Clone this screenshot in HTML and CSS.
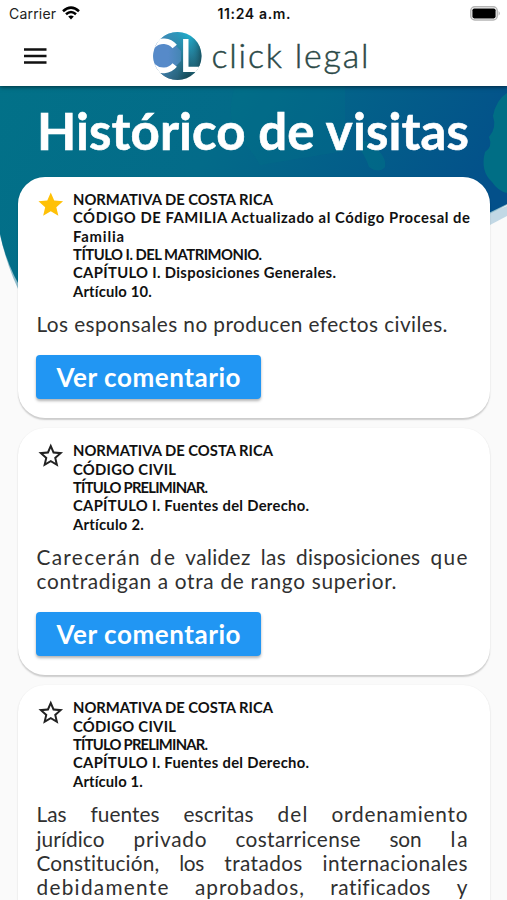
FILE: index.html
```html
<!DOCTYPE html>
<html lang="es">
<head>
<meta charset="utf-8">
<title>click legal</title>
<link rel="stylesheet" href="styles.css">
</head>
<body>
<header class="top">
  <div class="status">
    <div class="carrier"><span data-w="47">Carrier</span>
      <svg width="18" height="14" viewBox="0 0 18 14" fill="none" stroke="#000" stroke-width="2.6"><path d="M1 5.2Q9-1.8 17 5.2M4 8.2Q9 3.8 14 8.2"/><path d="M6.2 10.6Q9 8.2 11.8 10.6L9 13.5Z" fill="#000" stroke="none"/></svg>
    </div>
    <span class="time" data-w="73">11:24 a.m.</span>
    <svg class="battery" width="31" height="15" viewBox="0 0 31 15"><rect x=".8" y=".8" width="26.4" height="13.2" rx="4" fill="#fff" stroke="#b5b5b5" stroke-width="1.5"/><rect x="2.4" y="2.4" width="23.2" height="10" rx="1.8"/><path d="M28.6 5Q31 7.4 28.6 9.8Z" fill="#aaa"/></svg>
  </div>
  <div class="bar">
    <svg class="menu" width="23" height="16" viewBox="0 0 23 16"><path d="M0 1.6H22.5M0 8H22.5M0 14.4H22.5" stroke="#111" stroke-width="2.5"/></svg>
    <div class="brand">
      <svg width="50" height="50" viewBox="0 0 50 50">
        <defs>
          <linearGradient id="disc" x1=".75" y1="0" x2=".6" y2="1"><stop offset="0" stop-color="#20b5d5"/><stop offset=".45" stop-color="#247f9b"/><stop offset="1" stop-color="#153e48"/></linearGradient>
          <linearGradient id="side" x1="0" y1="0" x2="1" y2="0"><stop offset="0" stop-color="#4b86bd"/><stop offset=".5" stop-color="#3b83aa" stop-opacity=".5"/><stop offset=".75" stop-color="#23819a" stop-opacity="0"/><stop offset="1" stop-color="#14404b" stop-opacity=".75"/></linearGradient>
          <linearGradient id="bowl" x1="0" y1="0" x2="1" y2="0"><stop offset=".6" stop-color="#568ac9"/><stop offset="1" stop-color="#4486b4"/></linearGradient>
          <clipPath id="round"><circle cx="24.5" cy="25" r="24.3"/></clipPath>
        </defs>
        <circle cx="24.5" cy="25" r="24" fill="url(#disc)"/>
        <circle cx="24.5" cy="25" r="24" fill="url(#side)"/>
        <g clip-path="url(#round)">
          <path d="M-4 12H20L28 20V30L20 38H-4Z" fill="url(#bowl)"/>
          <path d="M21.7 15.6A14.6 14.6 0 1 0 21.7 34" fill="none" stroke="#fff" stroke-width="5.6"/>
          <path d="M-3 10L4 8L1 19L-3 20ZM-3 40L4 42L1 31L-3 30Z" fill="#fff"/>
          <path d="M32.8 8V38.4H47" fill="none" stroke="#fff" stroke-width="5.4"/>
        </g>
      </svg>
      <span class="name" data-w="157">click legal</span>
    </div>
  </div>
</header>
<main>
  <svg class="scene" width="507" height="260" viewBox="0 0 507 260" preserveAspectRatio="none">
    <defs><linearGradient id="sea" x1="0" y1="0" x2="1" y2=".3"><stop offset="0" stop-color="#027188"/><stop offset=".45" stop-color="#036b89"/><stop offset="1" stop-color="#03508a"/></linearGradient></defs>
    <path d="M490 139L507 130V120L480 130Z" fill="#c2d8e5"/>
    <path d="M0 0H507V119L440 153L60 250L24 215Q8 185 0 149Z" fill="#8fbccb"/>
    <path d="M0 0H507V118L440 151L60 250Q12 206 0 148Z" fill="url(#sea)"/>
    <path d="M235 0Q225 32 239 53Q252 64 260 79L345 65V0Z" fill="#007485" opacity=".24"/>
    <path d="M356 57Q364 51 372 59Q387 70 385 81Q379 88 369 81Q365 69 356 57Z" fill="#007485" opacity=".5"/>
    <path d="M507 7Q496 14 493 30Q497 42 489 51Q493 61 485 66Q480 85 492 96Q498 105 507 107Z" fill="#007384" opacity=".85"/>
  </svg>
  <h1><span data-w="432">Histórico de visitas</span></h1>
  <article class="card">
    <div class="ref">
      <svg class="star on" viewBox="0 0 24 24"><path d="M12 17.27 18.18 21l-1.64-7.03L22 9.24l-7.19-.61L12 2 9.19 8.63 2 9.24l5.46 4.73L5.82 21z"/></svg>
      <div class="source">
        <div><span data-w="200">NORMATIVA DE COSTA RICA</span></div>
        <div><span data-w="397">CÓDIGO DE FAMILIA Actualizado al Código Procesal de</span></div>
        <div><span data-w="51">Familia</span></div>
        <div><span data-w="189">TÍTULO I. DEL MATRIMONIO.</span></div>
        <div><span data-w="263">CAPÍTULO I. Disposiciones Generales.</span></div>
        <div><span data-w="79">Artículo 10.</span></div>
      </div>
    </div>
    <div class="text"><div><span data-w="411">Los esponsales no producen efectos civiles.</span></div></div>
    <button class="comment"><span data-w="184">Ver comentario</span></button>
  </article>
  <article class="card">
    <div class="ref">
      <svg class="star" viewBox="0 0 24 24"><path d="M22 9.24l-7.19-.62L12 2 9.19 8.63 2 9.24l5.46 4.73L5.82 21 12 17.27 18.18 21l-1.63-7.03zM12 15.4l-3.76 2.27 1-4.28-3.32-2.88 4.38-.38L12 6.1l1.71 4.04 4.38.38-3.32 2.88 1 4.28z"/></svg>
      <div class="source">
        <div><span data-w="200">NORMATIVA DE COSTA RICA</span></div>
        <div><span data-w="103">CÓDIGO CIVIL</span></div>
        <div><span data-w="135">TÍTULO PRELIMINAR.</span></div>
        <div><span data-w="236">CAPÍTULO I. Fuentes del Derecho.</span></div>
        <div><span data-w="71">Artículo 2.</span></div>
      </div>
    </div>
    <div class="text">
      <div class="full"><span data-w="103">Carecerán</span> <span data-w="25">de</span> <span data-w="65">validez</span> <span data-w="25">las</span> <span data-w="124">disposiciones</span> <span data-w="37">que</span></div>
      <div><span data-w="360">contradigan a otra de rango superior.</span></div>
    </div>
    <button class="comment"><span data-w="184">Ver comentario</span></button>
  </article>
  <article class="card">
    <div class="ref">
      <svg class="star" viewBox="0 0 24 24"><path d="M22 9.24l-7.19-.62L12 2 9.19 8.63 2 9.24l5.46 4.73L5.82 21 12 17.27 18.18 21l-1.63-7.03zM12 15.4l-3.76 2.27 1-4.28-3.32-2.88 4.38-.38L12 6.1l1.71 4.04 4.38.38-3.32 2.88 1 4.28z"/></svg>
      <div class="source">
        <div><span data-w="200">NORMATIVA DE COSTA RICA</span></div>
        <div><span data-w="103">CÓDIGO CIVIL</span></div>
        <div><span data-w="135">TÍTULO PRELIMINAR.</span></div>
        <div><span data-w="236">CAPÍTULO I. Fuentes del Derecho.</span></div>
        <div><span data-w="70">Artículo 1.</span></div>
      </div>
    </div>
    <div class="text">
      <div class="full"><span data-w="30">Las</span> <span data-w="69">fuentes</span> <span data-w="70">escritas</span> <span data-w="30">del</span> <span data-w="136">ordenamiento</span></div>
      <div class="full"><span data-w="68">jurídico</span> <span data-w="73">privado</span> <span data-w="125">costarricense</span> <span data-w="32">son</span> <span data-w="17">la</span></div>
      <div class="full"><span data-w="123">Constitución,</span> <span data-w="25">los</span> <span data-w="78">tratados</span> <span data-w="145">internacionales</span></div>
      <div class="full"><span data-w="132">debidamente</span> <span data-w="109">aprobados,</span> <span data-w="100">ratificados</span> <span data-w="11">y</span></div>
    </div>
  </article>
</main>
<script src="fit.js"></script>
</body>
</html>
```

FILE: styles.css
```css
* { box-sizing: border-box; }
body {
  margin: 0;
  background: #fafafa;
  color: #111;
  font-family: "Century Gothic", "URW Gothic", Lato, "Liberation Sans", sans-serif;
}
span { white-space: nowrap; }
.top {
  position: relative;
  z-index: 2;
  height: 86px;
  background: #fff;
  box-shadow: 0 1px 4px rgba(0, 0, 0, .55);
}
.status {
  height: 28px;
  display: grid;
  grid-template-columns: 1fr auto 1fr;
  align-items: center;
  padding: 0 6px 0 9px;
  font: 14px/28px Inter, sans-serif;
}
.carrier { display: flex; align-items: center; gap: 6px; color: #222; }
.carrier svg { margin-top: -2px; }
.time { font-weight: 600; margin-left: -2px; }
.battery { justify-self: end; margin-top: -1px; }
.bar { height: 58px; display: flex; align-items: flex-start; padding-left: 24px; }
.menu { margin-top: 20px; }
.brand { display: flex; margin: 3px 0 0 105.5px; gap: 9px; }
.name { font-size: 34px; line-height: 48px; color: #2b4947; font-weight: 300; -webkit-text-stroke: .45px #2b4947; }
main {
  position: relative;
  height: calc(100vh - 86px);
  overflow: hidden;
  padding: 0 17.5px 0 18px;
}
.scene { position: absolute; left: 0; top: 0; }
h1 {
  position: relative;
  margin: 0;
  height: 91px;
  padding-left: 19px;
  font-size: 51px;
  line-height: 89px;
  color: #fff;
  font-weight: 700;
  -webkit-text-stroke: .6px #fff;
}
.card {
  position: relative;
  margin-bottom: 10.2px;
  padding: 13px 22px 19px 18px;
  border-radius: 27px;
  background: #fff;
  box-shadow: 0 1.5px 1.5px rgba(0, 0, 0, .18), 0 0 2px rgba(0, 0, 0, .03);
}
.ref { display: flex; gap: 7.5px; }
.star { width: 29.5px; height: 29.5px; fill: #222; flex: none; }
.source { font-size: 14.8px; font-weight: 700; line-height: 18.35px; }
.star.on { fill: #ffc107; }
.text {
  margin: 12px 0 18.5px .5px;
  font-size: 20.8px;
  line-height: 24.4px;
  color: #303030;
  font-weight: 400;
}
.full { display: flex; justify-content: space-between; }
.comment {
  display: flex;
  justify-content: center;
  align-items: center;
  width: 225px;
  height: 44px;
  margin: 0;
  padding: 0;
  border: 0;
  border-radius: 4px;
  background: #2196f3;
  color: #fff;
  font: inherit;
  font-size: 26px;
  font-weight: 700;
  box-shadow: 0 2px 3px rgba(0, 0, 0, .3);
}
```

FILE: fit.js
```js
// Track each line of text so that it fills its intended measure.
document.querySelectorAll("[data-w]").forEach(function (el) {
  var natural = el.getBoundingClientRect().width;
  var count = el.textContent.length;
  var step = (Number(el.dataset.w) - natural) / Math.max(1, count - 1);
  el.style.letterSpacing = step.toFixed(3) + "px";
  el.style.marginRight = (-step).toFixed(3) + "px";
});
```
